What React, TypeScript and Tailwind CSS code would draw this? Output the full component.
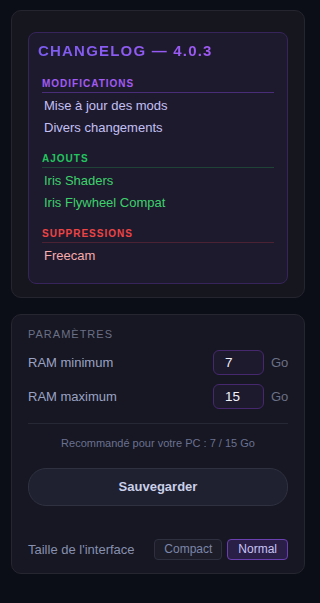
import React, { useState } from "react";

type Section = {
  title: string;
  head: string;
  line: string;
  item: string;
  items: string[];
};

const sections: Section[] = [
  {
    title: "MODIFICATIONS",
    head: "text-[#a25af2]",
    line: "border-[#4a2d78]",
    item: "text-[#c3c0f4]",
    items: ["Mise à jour des mods", "Divers changements"],
  },
  {
    title: "AJOUTS",
    head: "text-[#22c55e]",
    line: "border-[#1f4337]",
    item: "text-[#3dd16b]",
    items: ["Iris Shaders", "Iris Flywheel Compat"],
  },
  {
    title: "SUPPRESSIONS",
    head: "text-[#ef4444]",
    line: "border-[#4a2233]",
    item: "text-[#f8acac]",
    items: ["Freecam"],
  },
];

export default function App() {
  const [ramMin, setRamMin] = useState("7");
  const [ramMax, setRamMax] = useState("15");
  const [size, setSize] = useState<"compact" | "normal">("normal");

  return (
    <div
      className="min-h-[603px] w-[320px] bg-[#0b0d17] pt-[10px] pb-[28px]"
      style={{ fontFamily: '"Liberation Sans", Arial, sans-serif' }}
    >
      {/* CHANGELOG */}
      <div className="ml-[11px] w-[294px] rounded-[10px] border border-[#25252f] bg-[#16161f] px-[16px] pt-[21px] pb-[13px]">
        <div className="rounded-[8px] border border-[#36245a] bg-[#1e1a2e] pt-[8px] pb-[16px] pl-[9px] pr-[9px]">
          <h2 className="bg-gradient-to-r from-[#7b5cf0] to-[#ad58f5] bg-clip-text text-[15px] font-bold leading-[20px] tracking-[1.2px] text-transparent">
            CHANGELOG — 4.0.3
          </h2>

          <div className="mx-[4px] mt-[17px] flex flex-col gap-[14px]">
            {sections.map((s) => (
              <div key={s.title}>
                <div
                  className={`border-b pb-[2px] text-[10px] font-bold leading-[12px] tracking-[1px] ${s.head} ${s.line}`}
                >
                  {s.title}
                </div>
                <div className="mt-[2px] pl-[2px]">
                  {s.items.map((it) => (
                    <div key={it} className={`text-[13px] leading-[22px] ${s.item}`}>
                      {it}
                    </div>
                  ))}
                </div>
              </div>
            ))}
          </div>
        </div>
      </div>

      {/* PARAMETRES */}
      <div className="mt-[16px] ml-[11px] w-[294px] rounded-[10px] border border-[#25262f] bg-[#161722] px-[16px] pt-[12px] pb-[13px]">
        <div className="text-[11px] leading-[14px] tracking-[1px] text-[#6b7086]">PARAMÈTRES</div>

        <div className="mt-[9px] flex flex-col gap-[9px]">
          {[
            { label: "RAM minimum", v: ramMin, set: setRamMin },
            { label: "RAM maximum", v: ramMax, set: setRamMax },
          ].map((r) => (
            <div key={r.label} className="flex items-center">
              <span className="flex-1 text-[13px] text-[#9aa3c4]">{r.label}</span>
              <input
                value={r.v}
                onChange={(e) => r.set(e.target.value)}
                className="h-[25px] w-[51px] rounded-[6px] border border-[#45286e] bg-[#1e1a2e] pl-[11px] text-[13.5px] text-[#f2f2ff] outline-none"
              />
              <span className="ml-[7px] w-[17px] text-[13px] text-[#6b7086]">Go</span>
            </div>
          ))}
        </div>

        <div className="mt-[14px] border-t border-[#262836] pt-[12px] text-center text-[11px] leading-[14px] text-[#6b7190]">
          Recommandé pour votre PC : 7 / 15 Go
        </div>

        <button className="mt-[18px] h-[38px] w-full rounded-[18px] border border-[#2f3140] bg-[#1f2030] text-[13px] font-bold text-[#cad0e8]">
          Sauvegarder
        </button>

        <div className="mt-[33px] flex items-center">
          <span className="flex-1 text-[13px] text-[#8790b0]">Taille de l'interface</span>
          <div className="flex gap-[5px]">
            <button
              onClick={() => setSize("compact")}
              className={`h-[21px] rounded-[4px] border px-[9px] text-[12px] leading-[19px] ${
                size === "compact"
                  ? "border-[#6a3fb0] bg-[#2a1f47] text-[#c9c4f6]"
                  : "border-[#2e3040] bg-[#1c1d29] text-[#7c86a8]"
              }`}
            >
              Compact
            </button>
            <button
              onClick={() => setSize("normal")}
              className={`h-[21px] rounded-[4px] border px-[10px] text-[12px] leading-[19px] ${
                size === "normal"
                  ? "border-[#6a3fb0] bg-[#2a1f47] text-[#c9c4f6]"
                  : "border-[#2e3040] bg-[#1c1d29] text-[#7c86a8]"
              }`}
            >
              Normal
            </button>
          </div>
        </div>
      </div>
    </div>
  );
}
